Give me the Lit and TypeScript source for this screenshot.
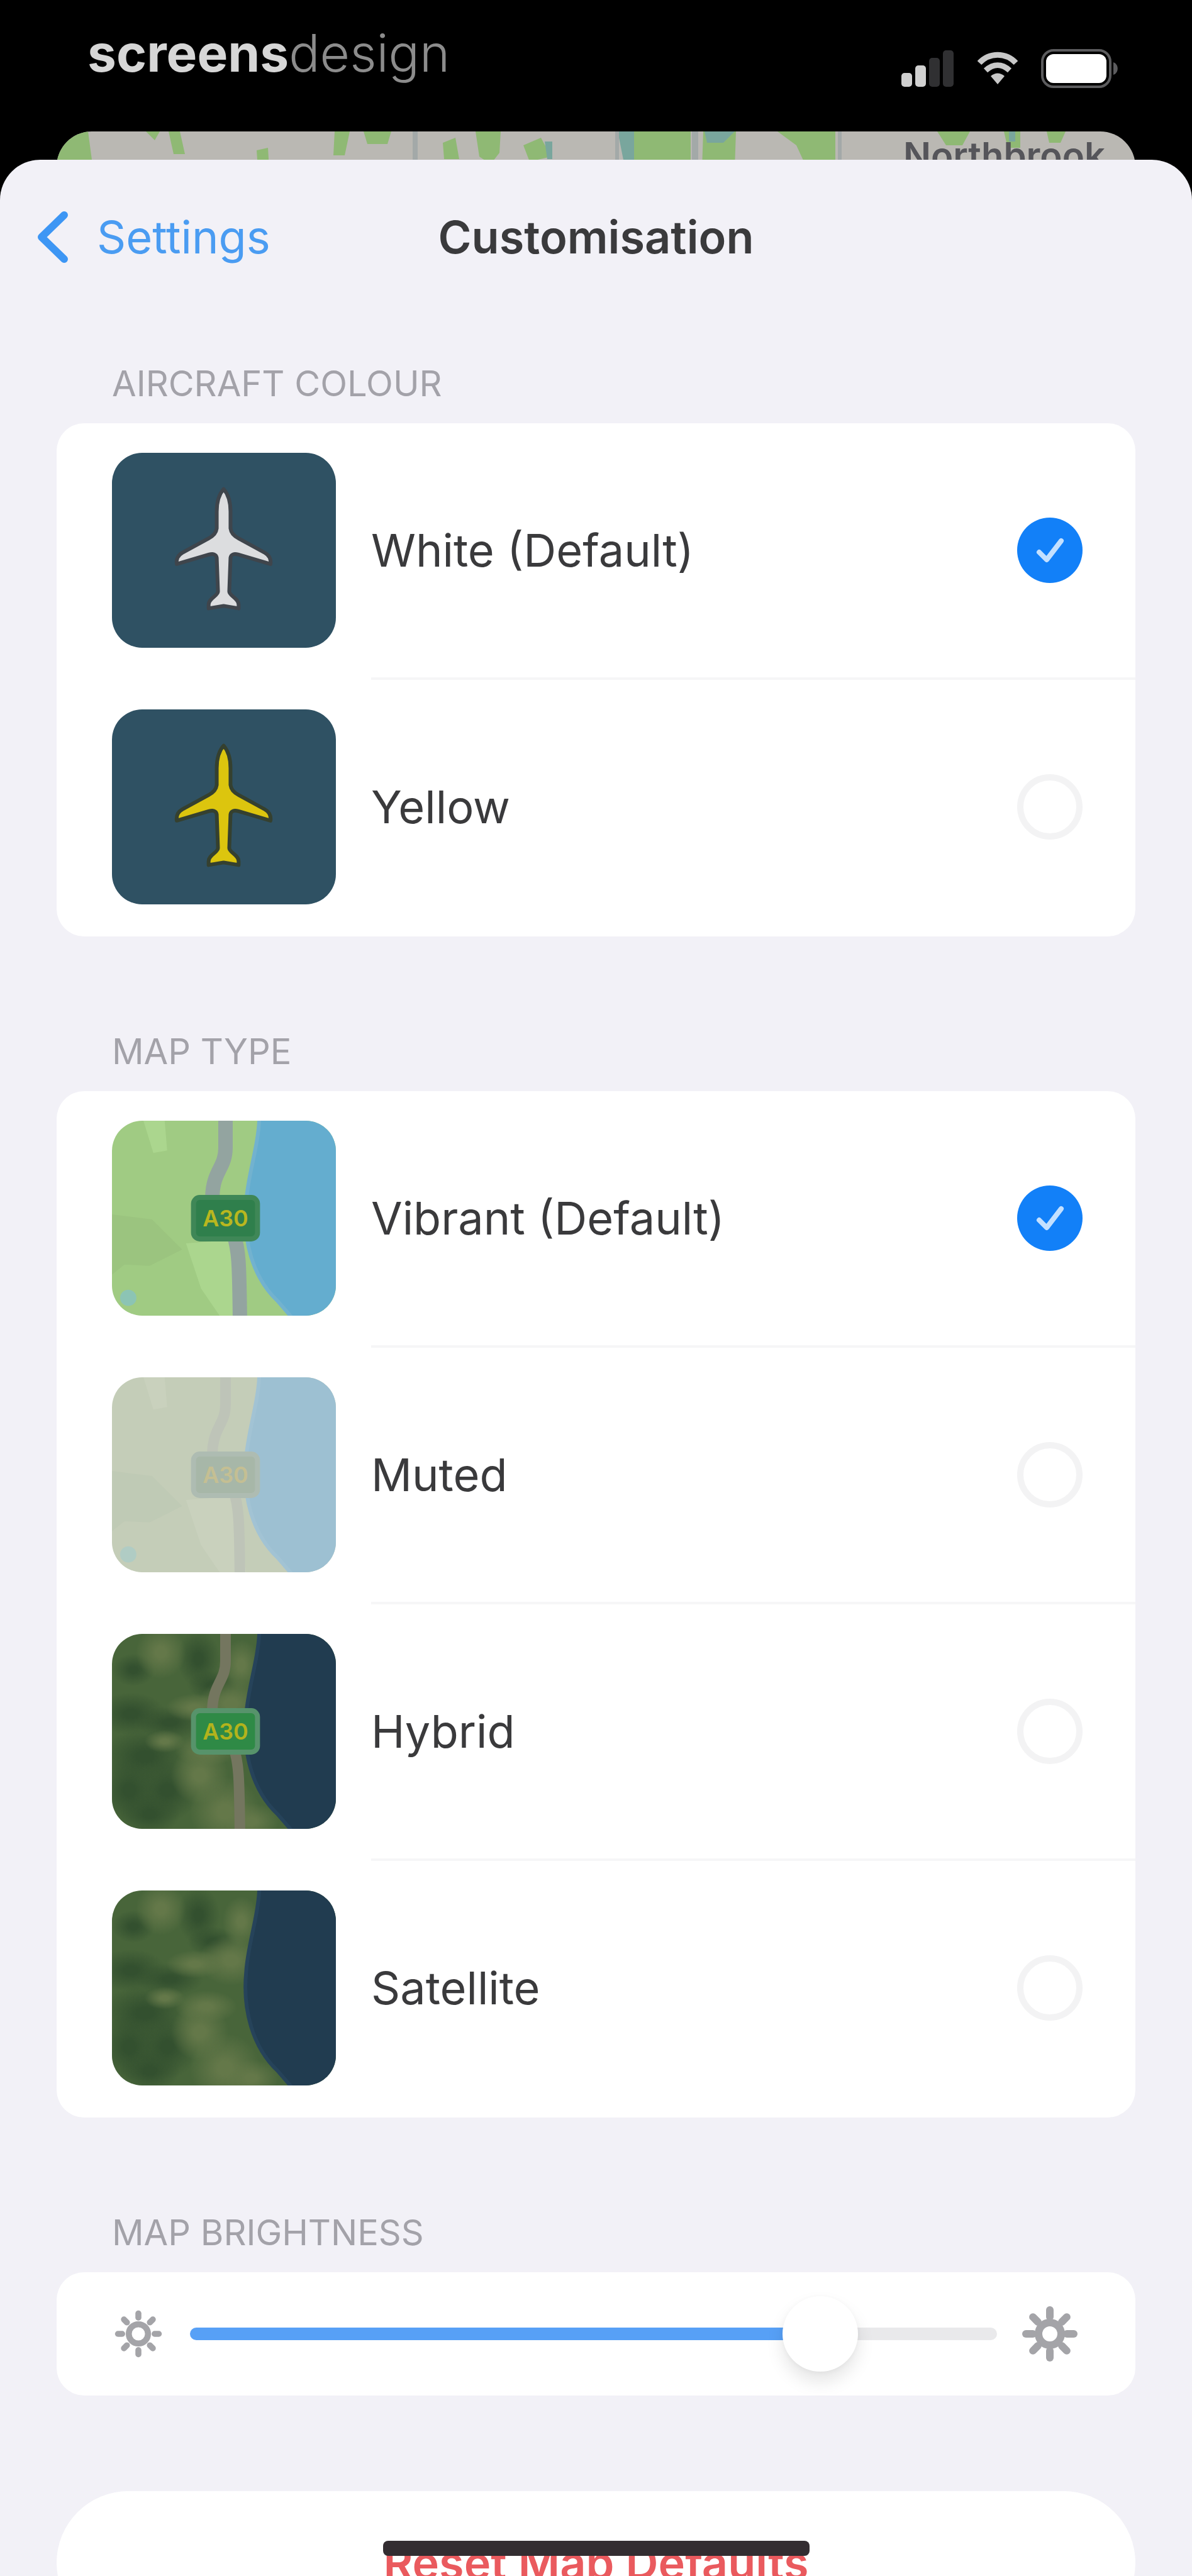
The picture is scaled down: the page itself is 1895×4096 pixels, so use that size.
import { html, svg, css, LitElement } from 'lit';
import { customElement, property, state } from 'lit/decorators.js';

type MapKind = 'vibrant' | 'muted' | 'hybrid' | 'satellite';

interface Option {
  id: string;
  label: string;
}

const AIRCRAFT: Option[] = [
  { id: 'white', label: 'White (Default)' },
  { id: 'yellow', label: 'Yellow' },
];

const MAP_TYPES: Option[] = [
  { id: 'vibrant', label: 'Vibrant (Default)' },
  { id: 'muted', label: 'Muted' },
  { id: 'hybrid', label: 'Hybrid' },
  { id: 'satellite', label: 'Satellite' },
];

const PALETTES = {
  vibrant: { land: '#a0cb83', light: '#abd68e', dark: '#9bc47f', water: '#64adcf', shore: '#72b2cf', pond: '#8cc4b4', road: '#93a4a0', badge: '#2f7f4c', edge: '#3f8757', text: '#b9b71f' },
  muted: { land: '#c4cdb8', light: '#c9d1bd', dark: '#bfcab5', water: '#9dc0d2', shore: '#a2c3d4', pond: '#b0ccc4', road: '#bec4b8', badge: '#a7b7a8', edge: '#aebcb2', text: '#c4bf93' },
  hybrid: { land: '#48653a', light: '#647849', dark: '#33502f', water: '#213c50', shore: '#26435a', pond: '', road: '#74765f', badge: '#2f8a46', edge: '#57936b', text: '#b3b31c' },
  satellite: { land: '#48653a', light: '#647849', dark: '#33502f', water: '#213c50', shore: '#26435a', pond: '', road: '', badge: '', edge: '', text: '' },
};

@customElement('aircraft-preview')
export class AircraftPreview extends LitElement {
  static styles = css`
    :host {
      display: block;
      background: #2f5163;
    }

    svg {
      display: block;
      width: 100%;
      height: 100%;
    }

    .white {
      fill: #dcdddf;
      stroke: #3f454c;
    }

    .yellow {
      fill: #dcc50e;
      stroke: #35402f;
    }
  `;

  @property({ type: String }) colour = 'white';

  render() {
    return html`
      <svg viewBox="0 0 357 312" aria-hidden="true">
        <path
          class="${this.colour}"
          stroke-width="6"
          stroke-linejoin="round"
          d="M178 58 C171 66 167 78 167 94 L167 121 C166 129 160 134 154 137 L112 160 C105 164 102 170 103 178 L154 163 C161 161 166 162 167 168 L169 222 C169 229 154 233 154 243 L154 249 L178 245 L202 249 L202 243 C202 233 187 229 187 222 L189 168 C190 162 195 161 202 163 L253 178 C254 170 251 164 244 160 L202 137 C196 134 190 129 189 121 L189 94 C189 78 185 66 178 58 Z"
        ></path>
      </svg>
    `;
  }
}

@customElement('map-preview')
export class MapPreview extends LitElement {
  static styles = css`
    :host {
      display: block;
    }

    svg {
      display: block;
      width: 100%;
      height: 100%;
    }

    text {
      font-family: Inter, 'Liberation Sans', sans-serif;
      font-size: 36px;
      font-weight: 600;
      text-anchor: middle;
    }
  `;

  @property({ type: String }) kind: MapKind = 'vibrant';

  private renderTerrain() {
    const p = PALETTES[this.kind];
    if (this.kind === 'vibrant' || this.kind === 'muted') {
      return svg`
        <path fill="${p.light}" d="M50 0 L84 0 L88 48 L66 52 Z M118 196 L200 190 L214 312 L172 312 L142 268 Z"></path>
        <path fill="${p.dark}" d="M0 150 L64 158 L112 206 L60 232 L20 230 L0 246 Z"></path>
        <circle cx="26" cy="283" r="13" fill="${p.pond}"></circle>
      `;
    }
    // x, y, rx, ry of the wooded patches and of the clearings
    const woods = [[34, 58, 34, 26], [138, 40, 34, 46], [160, 82, 40, 24], [30, 128, 56, 34], [92, 142, 54, 26], [52, 196, 70, 44], [28, 250, 48, 52], [88, 250, 50, 50], [60, 288, 48, 34]];
    const clearings = [[78, 30, 40, 42], [206, 50, 30, 40], [190, 112, 52, 40], [132, 118, 46, 22], [84, 172, 32, 18], [150, 186, 50, 26], [140, 226, 46, 46], [180, 284, 56, 56], [222, 300, 44, 30]];
    return svg`
      <defs>
        <radialGradient id="wood"><stop offset="20%" stop-color="${p.dark}"></stop><stop offset="100%" stop-color="${p.dark}" stop-opacity="0"></stop></radialGradient>
        <radialGradient id="clearing"><stop offset="20%" stop-color="${p.light}"></stop><stop offset="100%" stop-color="${p.light}" stop-opacity="0"></stop></radialGradient>
      </defs>
      ${woods.map(([x, y, rx, ry]) => svg`<ellipse cx="${x}" cy="${y}" rx="${rx}" ry="${ry}" fill="url(#wood)"></ellipse>`)}
      ${clearings.map(([x, y, rx, ry]) => svg`<ellipse cx="${x}" cy="${y}" rx="${rx}" ry="${ry}" fill="url(#clearing)"></ellipse>`)}
    `;
  }

  render() {
    const p = PALETTES[this.kind];
    return html`
      <svg viewBox="0 0 357 312" preserveAspectRatio="xMidYMid slice" aria-hidden="true">
        <rect width="357" height="312" fill="${p.land}"></rect>
        ${this.renderTerrain()}
        <path
          fill="${p.water}"
          stroke="${p.shore}"
          stroke-width="6"
          d="M235 -6 C234 40 216 90 214 130 C208 190 224 250 264 288 L290 318 H363 V-6 Z"
        ></path>
        ${this.kind === 'satellite' ? '' : svg`
          <path fill="none" stroke="${p.road}" stroke-width="${this.kind === 'vibrant' ? 23 : 17}" d="M181 -4 V44 C181 76 161 80 160 122 L194 182 C202 206 203 226 204 316"></path>
          <rect x="130" y="123" width="102" height="66" rx="10" fill="${p.badge}" stroke="${p.edge}" stroke-width="8"></rect>
          <text x="181" y="169" fill="${p.text}">A30</text>
        `}
      </svg>
    `;
  }
}

@customElement('option-list')
export class OptionList extends LitElement {
  static styles = css`
    :host {
      display: block;
      overflow: hidden;
      border-radius: 44px;
      background: #fff;
    }

    .row {
      display: flex;
      align-items: center;
      height: 408px;
      box-sizing: border-box;
      padding: 0 0 4px 88px;
      gap: 56px;
      cursor: pointer;
    }

    .preview {
      flex: none;
      width: 356px;
      height: 310px;
      border-radius: 48px;
      overflow: hidden;
    }

    .detail {
      flex: 1;
      display: flex;
      align-items: center;
      justify-content: space-between;
      height: 100%;
      padding-right: 84px;
    }

    .row:not(:last-child) .detail {
      box-shadow: 0 4px #f6f6f7;
    }

    .radio {
      display: grid;
    }

    input,
    .tick {
      grid-area: 1 / 1;
      width: 104px;
      height: 104px;
      margin: 0;
    }

    input {
      appearance: none;
      box-sizing: border-box;
      border: 10px solid #f3f3f4;
      border-radius: 50%;
    }

    input:checked {
      border: none;
      background: #1280f8;
    }

    .tick {
      fill: none;
      stroke: #c3e0ff;
      stroke-width: 8;
      stroke-linecap: round;
      stroke-linejoin: round;
      pointer-events: none;
    }

    input:not(:checked) + .tick {
      visibility: hidden;
    }
  `;

  @property({ type: String }) name = '';
  @property({ type: String }) value = '';
  @property({ attribute: false }) options: Option[] = [];

  private handleChange(id: string) {
    this.value = id;
    this.dispatchEvent(new CustomEvent('value-changed', { detail: { value: id } }));
  }

  render() {
    return html`
      ${this.options.map((option) => html`
        <label class="row">
          ${this.name === 'aircraft'
            ? html`<aircraft-preview class="preview" colour="${option.id}"></aircraft-preview>`
            : html`<map-preview class="preview" kind="${option.id}"></map-preview>`}
          <span class="detail">
            <span>${option.label}</span>
            <span class="radio">
              <input
                type="radio"
                name="${this.name}"
                value="${option.id}"
                .checked="${option.id === this.value}"
                @change="${() => this.handleChange(option.id)}"
              />
              <svg class="tick" viewBox="0 0 104 104" aria-hidden="true">
                <path d="M35 55 L47 67 L70 37"></path>
              </svg>
            </span>
          </span>
        </label>
      `)}
    `;
  }
}

@customElement('app-root')
export class AppRoot extends LitElement {
  static styles = css`
    :host {
      display: flex;
      flex-direction: column;
      position: relative;
      height: 100vh;
      overflow: hidden;
      background: #000;
      color: #3a3a3c;
      font-family: Inter, 'Liberation Sans', sans-serif;
      font-size: 72px;
      line-height: 88px;
    }

    .status {
      flex: none;
      display: flex;
      align-items: center;
      justify-content: space-between;
      height: 209px;
      box-sizing: border-box;
      padding: 0 116px 40px 139px;
    }

    .brand {
      color: #d6d6d6;
      font-size: 82px;
      font-weight: 700;
    }

    .brand-light {
      color: #8c8c8c;
      font-weight: 300;
    }

    .status-icons {
      display: flex;
      gap: 32px;
      padding-top: 48px;
    }

    .behind {
      flex: none;
      position: relative;
      display: flex;
      justify-content: flex-end;
      height: 110px;
      margin: 0 90px -65px;
      border-radius: 56px 56px 0 0;
      overflow: hidden;
      background: #bab8b3;
    }

    .strip {
      position: absolute;
      inset: 0;
      width: 100%;
      height: 100%;
    }

    .town {
      position: relative;
      padding-right: 48px;
      color: #55555a;
      font-size: 58px;
      font-weight: 600;
      line-height: 76px;
    }

    .sheet {
      flex: 1 0 auto;
      position: relative;
      border-radius: 64px 64px 0 0;
      background: #f2f1f7;
    }

    .nav {
      display: grid;
      grid-template-columns: 1fr auto 1fr;
      align-items: center;
      height: 250px;
      box-sizing: border-box;
      padding: 0 58px 4px;
    }

    .back {
      display: flex;
      align-items: center;
      gap: 44px;
      justify-self: start;
      color: #4a9cf2;
      text-decoration: none;
    }

    .title {
      margin: 0;
      font-size: 72px;
      font-weight: 600;
    }

    .content {
      display: flex;
      flex-direction: column;
      gap: 152px;
      padding: 75px 90px 0;
    }

    .heading {
      margin: 0 88px 32px;
      color: #a3a2a9;
      font-size: 56px;
      font-weight: 400;
      line-height: 62px;
    }

    .brightness {
      display: flex;
      align-items: center;
      gap: 40px;
      height: 196px;
      padding: 0 92px 0 88px;
      border-radius: 44px;
      background: #fff;
    }

    .sun {
      flex: none;
      fill: none;
      stroke: #a4a4a8;
      stroke-linecap: round;
    }

    .slider {
      --fill: 0%;
      flex: 1;
      min-width: 0;
      appearance: none;
      height: 120px;
      margin: 0;
      background: none;
    }

    .slider::-webkit-slider-runnable-track {
      height: 20px;
      border-radius: 10px;
      background: linear-gradient(to right, #57a0f6 var(--fill), #e9e9eb var(--fill));
    }

    .slider::-webkit-slider-thumb {
      appearance: none;
      width: 120px;
      height: 120px;
      margin-top: -50px;
      border-radius: 50%;
      background: #fff;
      box-shadow: 0 16px 28px rgba(0, 0, 0, 0.1), 0 2px 8px rgba(0, 0, 0, 0.04);
    }

    .reset {
      height: 228px;
      padding: 0;
      border: none;
      border-radius: 114px;
      background: #fff;
      color: #ea5a5e;
      font: inherit;
      font-weight: 600;
    }

    .home-indicator {
      position: absolute;
      left: 50%;
      bottom: 32px;
      width: 678px;
      height: 24px;
      border-radius: 8px;
      background: #332d31;
      transform: translateX(-50%);
    }
  `;

  @state() private aircraft = 'white';
  @state() private mapType = 'vibrant';
  @state() private brightness = 81;

  private handleInput(e: Event) {
    this.brightness = Number((e.target as HTMLInputElement).value);
  }

  private reset() {
    this.mapType = 'vibrant';
    this.brightness = 81;
  }

  private renderSun(size: number, ring: number, inner: number, outer: number, stroke: number) {
    const rays = [0, 45, 90, 135, 180, 225, 270, 315];
    return html`
      <svg class="sun" width="${size}" height="${size}" viewBox="-44 -44 88 88" stroke-width="${stroke}" aria-hidden="true">
        <circle r="${ring}"></circle>
        ${rays.map((a) => svg`<line y1="${-inner}" y2="${-outer}" transform="rotate(${a})"></line>`)}
      </svg>
    `;
  }

  private renderStatus() {
    return html`
      <div class="status">
        <span class="brand">screens<span class="brand-light">design</span></span>
        <div class="status-icons">
          <svg width="84" height="62" viewBox="0 0 84 62" aria-hidden="true">
            <rect x="0" y="38" width="17" height="22" rx="5" fill="#d0d0d0"></rect>
            <rect x="22" y="26" width="17" height="34" rx="5" fill="#d0d0d0"></rect>
            <rect x="44" y="14" width="17" height="46" rx="5" fill="#303032"></rect>
            <rect x="66" y="2" width="17" height="58" rx="5" fill="#303032"></rect>
          </svg>
          <svg width="74" height="62" viewBox="0 0 74 62" aria-hidden="true">
            <g fill="none" stroke="#c8c8c8" stroke-width="9">
              <path d="M8 22 C24 5 50 5 66 22"></path>
              <path d="M18 34 C30 23 44 23 56 34"></path>
            </g>
            <path fill="#c8c8c8" d="M26 43 C33 37 41 37 48 43 L37 56 Z"></path>
          </svg>
          <svg width="124" height="62" viewBox="0 0 124 62" aria-hidden="true">
            <rect x="2" y="2" width="108" height="58" rx="18" fill="none" stroke="#5c5c5e" stroke-width="4"></rect>
            <rect x="8" y="8" width="96" height="46" rx="12" fill="#fff"></rect>
            <path fill="#5c5c5e" d="M115 21 C124 24 124 38 115 41 Z"></path>
          </svg>
        </div>
      </div>
    `;
  }

  private renderBehind() {
    return html`
      <div class="behind">
        <svg class="strip" viewBox="0 0 1715 110" preserveAspectRatio="none" aria-hidden="true">
          <path
            fill="#8fb974"
            d="M0 0 H50 L58 60 H0 Z M142 0 H164 L156 14 Z M178 0 H196 L204 36 H186 Z M318 30 L336 26 L338 60 H320 Z M442 0 H466 L458 38 H440 Z M488 0 H532 L526 20 H494 Z M614 18 L634 10 L640 44 H616 Z M666 0 H706 L704 34 L690 52 L672 40 Z M742 22 L770 10 L786 40 L752 48 Z M918 0 H1008 V60 H912 Z M1028 0 H1080 L1078 60 H1026 Z M1146 0 H1238 V48 H1188 L1176 22 Z M1400 0 H1452 L1440 22 H1414 Z M1506 0 H1532 V26 H1512 Z M1574 0 H1604 L1596 18 H1578 Z"
          ></path>
          <path fill="#79a69d" d="M892 0 H918 V60 H904 Z M1030 0 H1078 L1060 18 H1034 Z M776 16 H788 V44 H780 Z M1514 0 H1524 V16 H1514 Z"></path>
          <path fill="#a3a9a8" d="M566 0 H574 V60 H566 Z M1010 0 H1020 V60 H1010 Z M888 0 H894 V60 H888 Z M1242 0 H1248 V60 H1242 Z"></path>
        </svg>
        <span class="town">Northbrook</span>
      </div>
    `;
  }

  render() {
    return html`
      ${this.renderStatus()}
      ${this.renderBehind()}
      <main class="sheet">
        <header class="nav">
          <a class="back" href="#settings">
            <svg width="52" height="84" viewBox="0 0 52 84" fill="none" stroke="#3d96f4" stroke-width="12" stroke-linecap="round" stroke-linejoin="round" aria-hidden="true">
              <path d="M44 7 L8 42 L44 77"></path>
            </svg>
            <span>Settings</span>
          </a>
          <h1 class="title">Customisation</h1>
        </header>
        <div class="content">
          <section>
            <h2 class="heading">AIRCRAFT COLOUR</h2>
            <option-list
              name="aircraft"
              .options="${AIRCRAFT}"
              .value="${this.aircraft}"
              @value-changed="${(e: CustomEvent) => { this.aircraft = e.detail.value; }}"
            ></option-list>
          </section>
          <section>
            <h2 class="heading">MAP TYPE</h2>
            <option-list
              name="map"
              .options="${MAP_TYPES}"
              .value="${this.mapType}"
              @value-changed="${(e: CustomEvent) => { this.mapType = e.detail.value; }}"
            ></option-list>
          </section>
          <section>
            <h2 class="heading">MAP BRIGHTNESS</h2>
            <div class="brightness">
              ${this.renderSun(84, 16, 27, 34, 10)}
              <input
                class="slider"
                type="range"
                min="0"
                max="100"
                .value="${String(this.brightness)}"
                style="--fill: ${this.brightness}%"
                @input="${this.handleInput}"
                aria-label="Map brightness"
              />
              ${this.renderSun(88, 18, 27, 38, 12)}
            </div>
          </section>
          <button class="reset" @click="${this.reset}">Reset Map Defaults</button>
        </div>
      </main>
      <div class="home-indicator"></div>
    `;
  }
}
